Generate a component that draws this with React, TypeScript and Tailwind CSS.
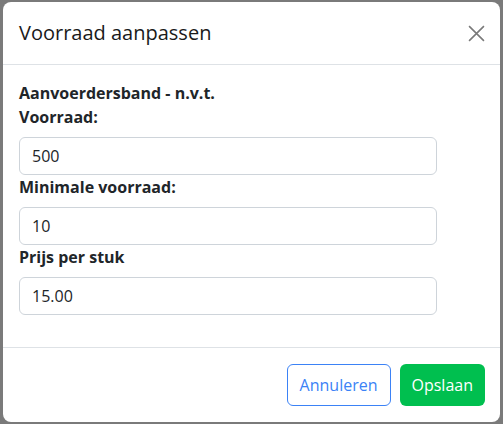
import React from "react";

const fieldClass =
  "block w-[418px] h-[38px] rounded-md border border-[#ced4da] bg-white px-3 text-base text-[#212529] outline-none";

export default function App() {
  return (
    <div
      className="min-h-screen bg-[#7a7a7a] px-[3px] pt-[2px]"
      style={{ fontFamily: '"Open Sans", "Noto Sans", sans-serif' }}
    >
      <div className="w-[497px] h-[420px] rounded-lg bg-white flex flex-col overflow-hidden">
        <div className="flex items-center justify-between h-[63px] pl-4 pr-[15px] border-b border-[#dee2e6]">
          <h5 className="text-xl leading-[30px] text-[#1a1a1a]">Voorraad aanpassen</h5>
          <button className="flex items-center justify-center text-[#7a7a7a]">
            <svg width="17" height="17" viewBox="0 0 16 16" fill="none" stroke="currentColor" strokeWidth="1.5">
              <path d="M1 1 15 15M15 1 1 15" />
            </svg>
          </button>
        </div>

        <div className="px-4 pt-4 pb-8 border-b border-[#dee2e6] text-[#212529]">
          <div className="font-bold leading-6">Aanvoerdersband - n.v.t.</div>
          <label className="block font-bold leading-6 mb-2">Voorraad:</label>
          <input className={fieldClass} defaultValue="500" />
          <label className="block font-bold leading-6 mb-2">Minimale voorraad:</label>
          <input className={fieldClass} defaultValue="10" />
          <label className="block font-bold leading-6 mb-2">Prijs per stuk</label>
          <input className={fieldClass} defaultValue="15.00" />
        </div>

        <div className="flex justify-end items-center gap-[9px] px-[15px] pt-4">
          <button className="h-[42px] px-3 rounded-md border border-[#3b82f6] text-[#3b82f6] text-base bg-white">
            Annuleren
          </button>
          <button className="h-[42px] px-3 rounded-md bg-[#00bf4f] text-white text-base">
            Opslaan
          </button>
        </div>
      </div>
    </div>
  );
}
